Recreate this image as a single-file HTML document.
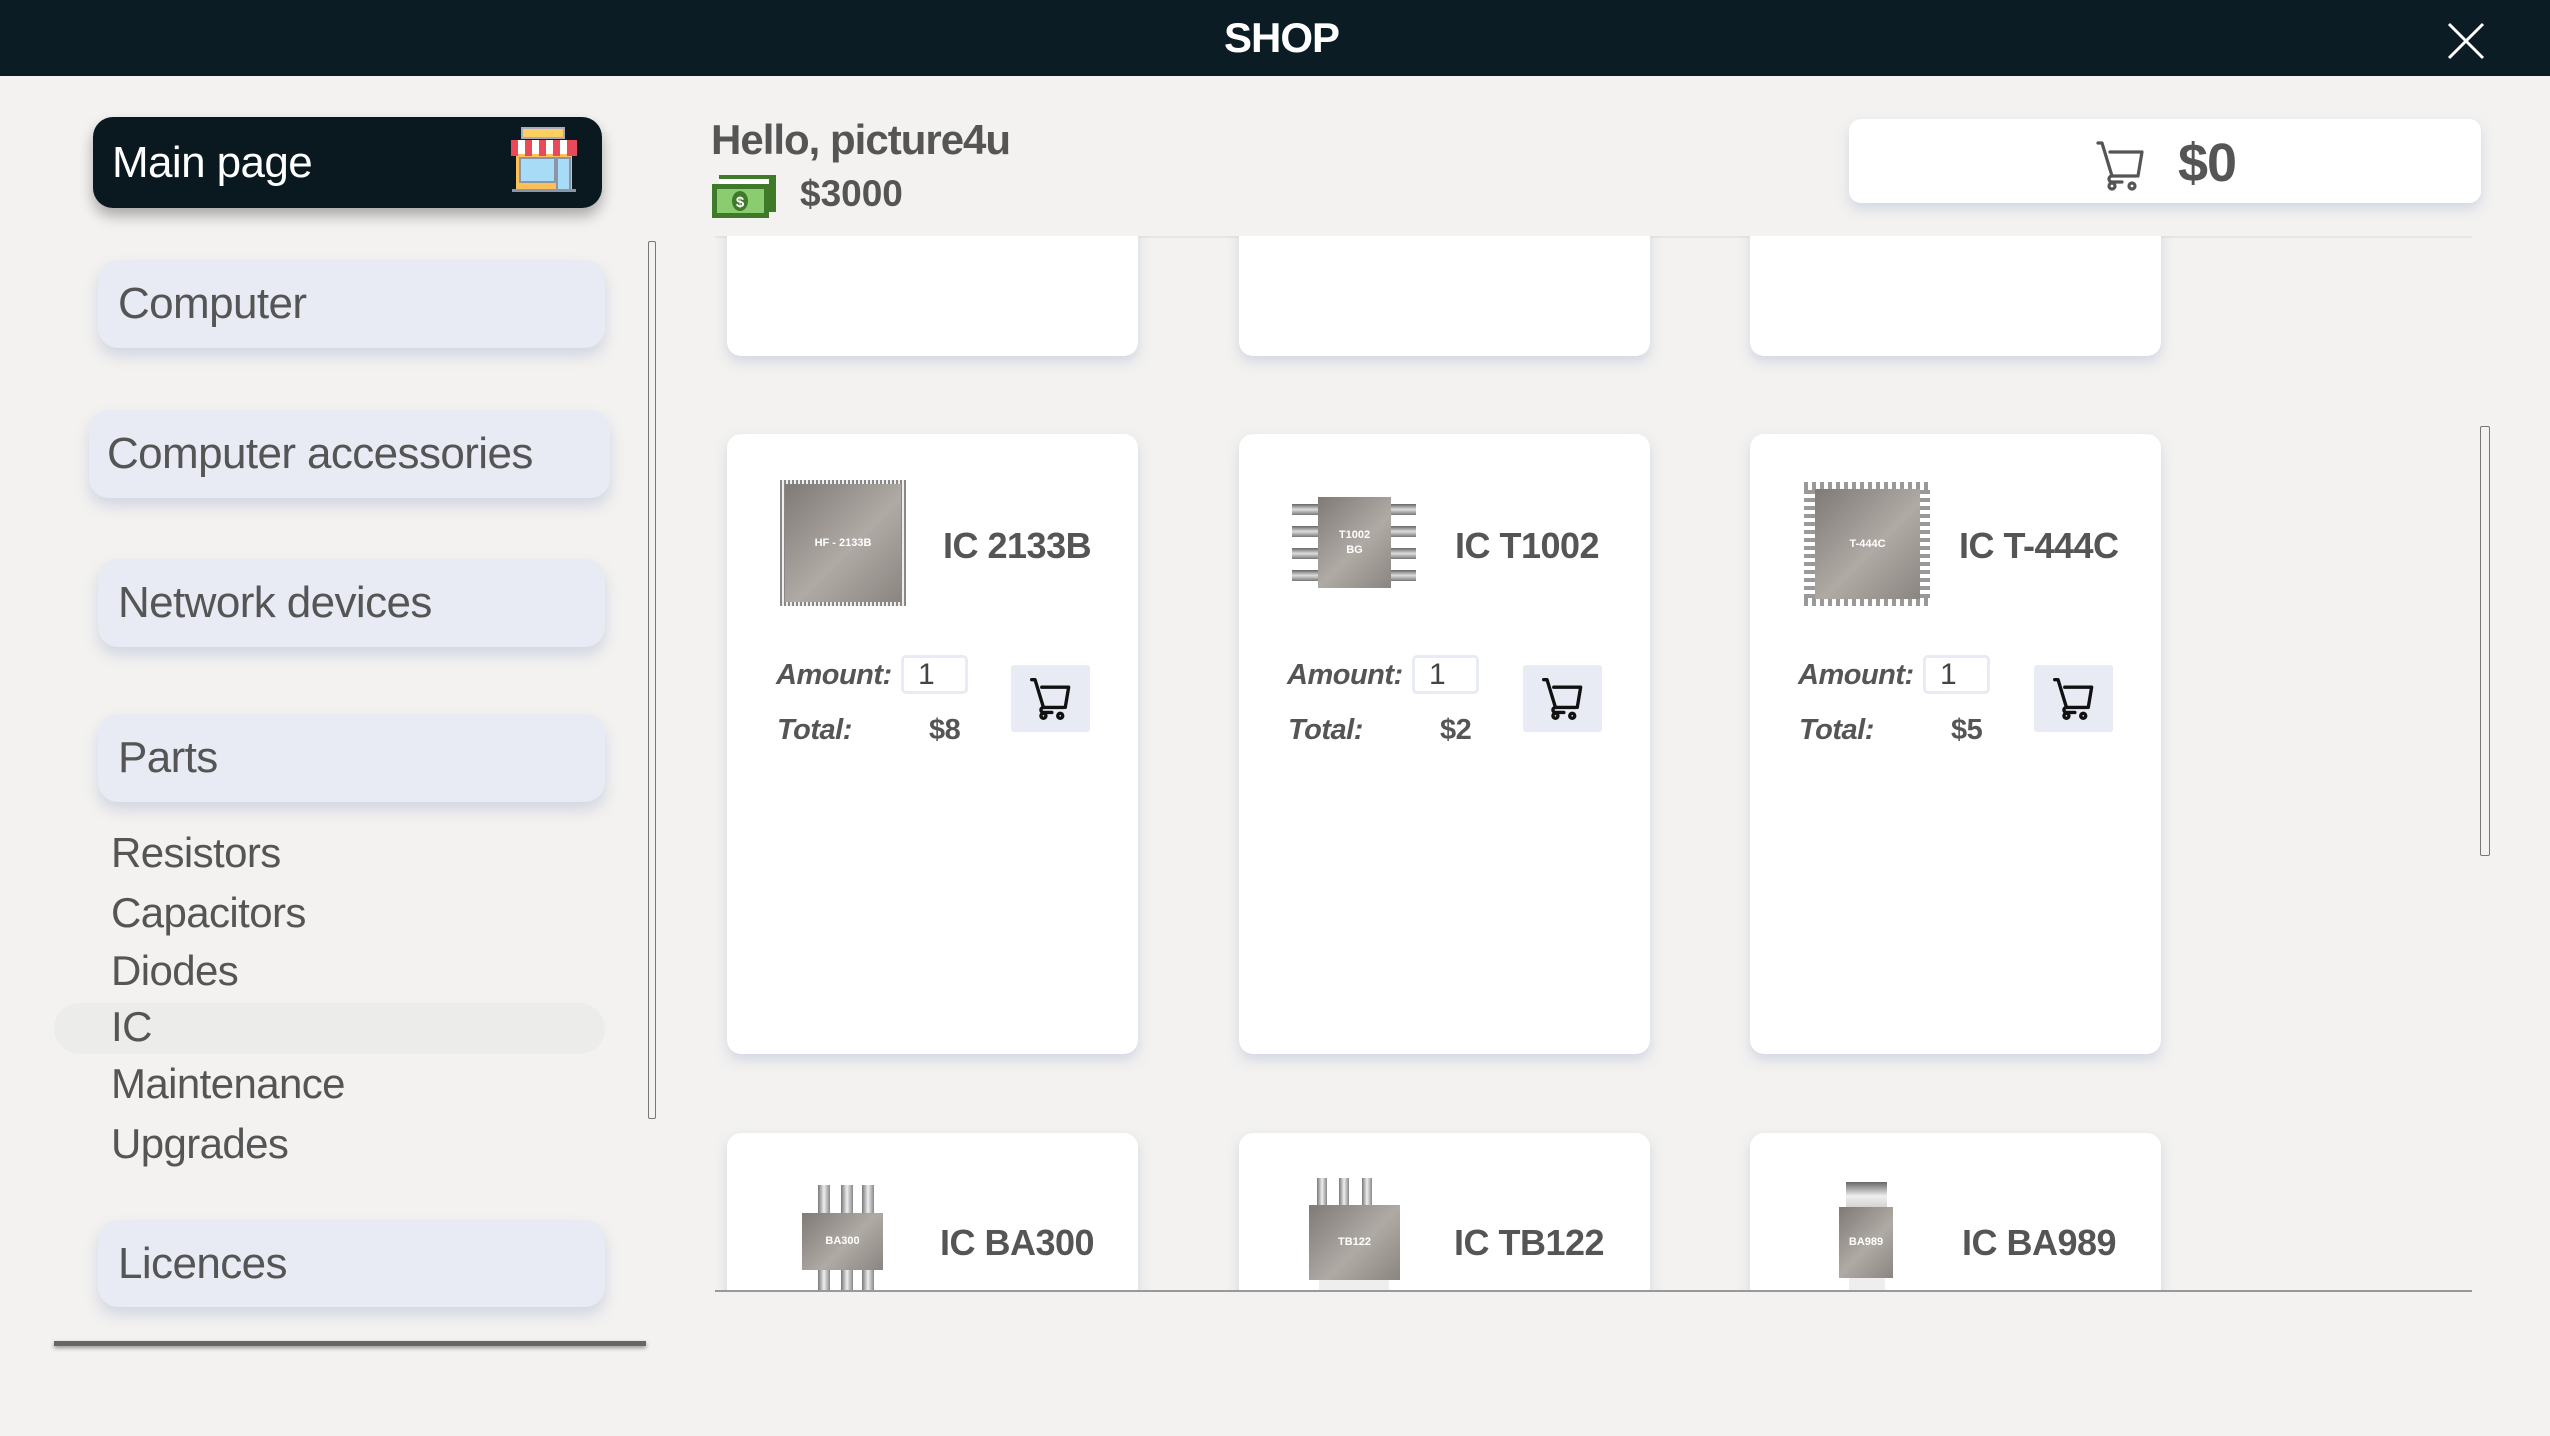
<!DOCTYPE html>
<html><head><meta charset="utf-8">
<style>
*{box-sizing:border-box;margin:0;padding:0}
body{width:2550px;height:1436px;background:#f3f2f0;font-family:"Liberation Sans",sans-serif;color:#555;position:relative;overflow:hidden}
.abs{position:absolute}
.top{left:0;top:0;width:2550px;height:76px;background:#0b1c25}
.shop{left:1224px;top:14px;color:#fff;font-weight:bold;font-size:42px;letter-spacing:-1px}
.btn{position:absolute;background:#e8ebf4;border-radius:20px;box-shadow:0 8px 14px rgba(170,180,210,.45);font-size:44px;color:#555;letter-spacing:-0.6px;padding-left:20px;display:flex;align-items:center}
.sub{position:absolute;left:111px;font-size:42px;color:#555;letter-spacing:-0.6px;font-weight:300}
.card{position:absolute;background:#fff;border-radius:14px;box-shadow:0 6px 12px rgba(180,190,215,.5);width:411px}
.title{position:absolute;font-size:36px;color:#555;font-weight:bold;letter-spacing:-0.5px}
.lab{position:absolute;font-size:29px;font-style:italic;color:#555;font-weight:bold;letter-spacing:-0.5px}
.inp{position:absolute;width:67px;height:39px;border:3px solid #e8ebf4;border-radius:5px;font-size:30px;padding-left:14px;line-height:33px;color:#444}
.cb{position:absolute;width:79px;height:67px;background:#e8ebf4;border-radius:3px;display:flex;align-items:center;justify-content:center}
.chip{position:absolute;background:linear-gradient(135deg,#7f7a76,#b0aaa5 55%,#8a8580);color:#fff;font-size:11px;font-weight:bold;display:flex;align-items:center;justify-content:center;text-align:center;line-height:15px}
.pin{position:absolute;background:linear-gradient(90deg,#777,#eee 50%,#888)}
.pinh{position:absolute;background:linear-gradient(180deg,#666,#ddd 50%,#777)}
</style></head><body>
<div class="abs top"></div>
<div class="abs shop">SHOP</div>
<svg class="abs" style="left:2445px;top:20px" width="42" height="42" viewBox="0 0 42 42"><path d="M4 4L38 38M38 4L4 38" stroke="#fff" stroke-width="3"/></svg>

<div class="abs" style="left:93px;top:117px;width:509px;height:91px;background:#0a1820;border-radius:20px;box-shadow:0 8px 14px rgba(0,0,0,.3);color:#fff;font-size:44px;padding-left:19px;display:flex;align-items:center;letter-spacing:-0.6px">Main page</div>
<svg class="abs" style="left:508px;top:126px" width="72" height="68" viewBox="0 0 72 68">
<rect x="14" y="2" width="42" height="10" fill="#fcd060" stroke="#aab" stroke-width="2"/>
<rect x="8" y="28" width="56" height="36" fill="#fdbf58"/>
<rect x="12" y="32" width="35" height="24" fill="#a8dcf6" stroke="#8a96a8" stroke-width="2"/>
<rect x="49" y="32" width="13" height="32" fill="#a8dcf6" stroke="#8a96a8" stroke-width="2"/>
<rect x="3" y="14" width="66" height="14" fill="#fff"/>
<g fill="#e84a5a"><rect x="3" y="14" width="7" height="16"/><rect x="17" y="14" width="7" height="16"/><rect x="31" y="14" width="7" height="16"/><rect x="45" y="14" width="7" height="16"/><rect x="59" y="14" width="10" height="16"/></g>
<rect x="4" y="63" width="64" height="3" fill="#8a96a8"/>
</svg>
<div class="btn" style="left:98px;top:260px;width:507px;height:88px">Computer</div>
<div class="btn" style="left:89px;top:410px;width:521px;height:88px;padding-left:18px">Computer accessories</div>
<div class="btn" style="left:98px;top:559px;width:507px;height:88px">Network devices</div>
<div class="btn" style="left:98px;top:714px;width:507px;height:88px">Parts</div>
<div class="abs" style="left:54px;top:1003px;width:551px;height:51px;background:#ececea;border-radius:26px"></div>
<div class="sub" style="top:829px">Resistors</div>
<div class="sub" style="top:889px">Capacitors</div>
<div class="sub" style="top:947px">Diodes</div>
<div class="sub" style="top:1003px">IC</div>
<div class="sub" style="top:1060px">Maintenance</div>
<div class="sub" style="top:1120px">Upgrades</div>
<div class="btn" style="left:98px;top:1220px;width:507px;height:87px">Licences</div>
<div class="abs" style="left:54px;top:1341px;width:592px;height:5px;background:#666;box-shadow:0 2px 4px rgba(0,0,0,.4)"></div>
<div class="abs" style="left:648px;top:241px;width:8px;height:878px;border:1.5px solid #777;border-radius:2px"></div>

<div class="abs" style="left:711px;top:116px;font-size:42px;font-weight:bold;letter-spacing:-1px">Hello, picture4u</div>
<svg class="abs" style="left:712px;top:175px" width="64" height="43" viewBox="0 0 64 43">
<rect x="7" y="0" width="57" height="37" fill="#3f7a2a"/><rect x="7" y="4" width="50" height="33" fill="#fff"/>
<rect x="0" y="9" width="57" height="34" fill="#3f7a2a"/><rect x="5" y="14" width="47" height="24" fill="#8ccc70"/>
<ellipse cx="28" cy="26" rx="8" ry="10" fill="#3f7a2a"/><text x="28" y="32" font-size="15" font-weight="bold" fill="#fff" text-anchor="middle" font-family="Liberation Sans">$</text>
</svg>
<div class="abs" style="left:800px;top:173px;font-size:37px;font-weight:bold">$3000</div>
<div class="abs" style="left:1849px;top:119px;width:632px;height:84px;background:#fff;border-radius:12px;box-shadow:0 6px 12px rgba(180,190,215,.5)"></div>
<svg class="abs" style="left:2096px;top:141px" width="50" height="50" viewBox="0 0 50 50"><g fill="none" stroke="#555" stroke-width="3.2" stroke-linecap="round" stroke-linejoin="round"><path d="M2 2h4l10 33h24M14 11h32l-4 24"/><path d="M16 35c-4 0-4 6 0 6h10"/><circle cx="16" cy="45" r="3"/><circle cx="36" cy="45" r="3"/></g></svg>
<div class="abs" style="left:2178px;top:132px;font-size:54px;font-weight:bold;letter-spacing:-1px">$0</div>

<div class="abs" style="left:715px;top:236px;width:1757px;height:1055px;overflow:hidden">
 <div style="position:absolute;left:0;top:0;width:1757px;height:2px;background:#e6e6e6"></div>
 <div class="card" style="left:12px;top:-20px;height:140px"></div>
 <div class="card" style="left:524px;top:-20px;height:140px"></div>
 <div class="card" style="left:1035px;top:-20px;height:140px"></div>
 <div class="card" style="left:12px;top:198px;height:620px"></div>
 <div class="card" style="left:524px;top:198px;height:620px"></div>
 <div class="card" style="left:1035px;top:198px;height:620px"></div>
 <div class="card" style="left:12px;top:897px;height:300px"></div>
 <div class="card" style="left:524px;top:897px;height:300px"></div>
 <div class="card" style="left:1035px;top:897px;height:300px"></div>
</div>
<div class="abs" style="left:715px;top:1290px;width:1757px;height:2px;background:#999"></div>

<div class="abs" style="left:780px;top:480px;width:126px;height:126px;background:repeating-linear-gradient(90deg,#888 0 2px,#eee 2px 4px);"></div>
<div class="chip" style="left:785px;top:484px;width:116px;height:118px">HF - 2133B</div>
<div class="title" style="left:943px;top:525px">IC 2133B</div>

<div class="pinh" style="left:1292px;top:504px;width:124px;height:11px"></div>
<div class="pinh" style="left:1292px;top:526px;width:124px;height:11px"></div>
<div class="pinh" style="left:1292px;top:548px;width:124px;height:11px"></div>
<div class="pinh" style="left:1292px;top:570px;width:124px;height:11px"></div>
<div class="chip" style="left:1318px;top:497px;width:73px;height:91px">T1002<br>BG</div>
<div class="title" style="left:1455px;top:525px">IC T1002</div>

<div class="abs" style="left:1804px;top:482px;width:126px;height:124px;background:repeating-linear-gradient(90deg,#999 0 4px,#fff 4px 8px);"></div>
<div class="abs" style="left:1804px;top:490px;width:126px;height:108px;background:repeating-linear-gradient(0deg,#999 0 4px,#fff 4px 8px);"></div>
<div class="chip" style="left:1815px;top:489px;width:105px;height:110px">T-444C</div>
<div class="title" style="left:1959px;top:525px">IC T-444C</div>

<div class="lab" style="left:776px;top:659px">Amount:</div><div class="inp" style="left:901px;top:655px">1</div>
<div class="lab" style="left:777px;top:714px">Total:</div><div class="lab" style="left:929px;top:714px;font-style:normal">$8</div>
<div class="lab" style="left:1287px;top:659px">Amount:</div><div class="inp" style="left:1412px;top:655px">1</div>
<div class="lab" style="left:1288px;top:714px">Total:</div><div class="lab" style="left:1440px;top:714px;font-style:normal">$2</div>
<div class="lab" style="left:1798px;top:659px">Amount:</div><div class="inp" style="left:1923px;top:655px">1</div>
<div class="lab" style="left:1799px;top:714px">Total:</div><div class="lab" style="left:1951px;top:714px;font-style:normal">$5</div>
<div class="cb" style="left:1011px;top:665px"><svg width="42" height="42" viewBox="0 0 50 50"><g fill="none" stroke="#111" stroke-width="4" stroke-linecap="round" stroke-linejoin="round"><path d="M2 2h4l10 33h24M14 11h32l-4 24"/><path d="M16 35c-4 0-4 6 0 6h10"/><circle cx="16" cy="45" r="3"/><circle cx="36" cy="45" r="3"/></g></svg></div>
<div class="cb" style="left:1523px;top:665px"><svg width="42" height="42" viewBox="0 0 50 50"><g fill="none" stroke="#111" stroke-width="4" stroke-linecap="round" stroke-linejoin="round"><path d="M2 2h4l10 33h24M14 11h32l-4 24"/><path d="M16 35c-4 0-4 6 0 6h10"/><circle cx="16" cy="45" r="3"/><circle cx="36" cy="45" r="3"/></g></svg></div>
<div class="cb" style="left:2034px;top:665px"><svg width="42" height="42" viewBox="0 0 50 50"><g fill="none" stroke="#111" stroke-width="4" stroke-linecap="round" stroke-linejoin="round"><path d="M2 2h4l10 33h24M14 11h32l-4 24"/><path d="M16 35c-4 0-4 6 0 6h10"/><circle cx="16" cy="45" r="3"/><circle cx="36" cy="45" r="3"/></g></svg></div>

<div class="abs" style="left:715px;top:1100px;width:1757px;height:190px;overflow:hidden">
 <div class="pin" style="left:103px;top:85px;width:12px;height:110px"></div>
 <div class="pin" style="left:126px;top:85px;width:12px;height:110px"></div>
 <div class="pin" style="left:147px;top:85px;width:12px;height:110px"></div>
 <div class="chip" style="left:87px;top:113px;width:81px;height:57px">BA300</div>
 <div class="title" style="left:225px;top:122px">IC BA300</div>
 <div class="pin" style="left:602px;top:78px;width:10px;height:30px"></div>
 <div class="pin" style="left:624px;top:78px;width:10px;height:30px"></div>
 <div class="pin" style="left:647px;top:78px;width:10px;height:30px"></div>
 <div class="abs" style="left:604px;top:175px;width:70px;height:30px;background:#eee"></div>
 <div class="chip" style="left:594px;top:105px;width:91px;height:75px">TB122</div>
 <div class="title" style="left:739px;top:122px">IC TB122</div>
 <div class="abs" style="left:1131px;top:82px;width:41px;height:28px;background:linear-gradient(180deg,#666,#eee 50%,#ccc)"></div>
 <div class="abs" style="left:1134px;top:175px;width:36px;height:20px;background:#eee"></div>
 <div class="chip" style="left:1124px;top:107px;width:54px;height:71px">BA989</div>
 <div class="title" style="left:1247px;top:122px">IC BA989</div>
</div>

<div class="abs" style="left:2480px;top:426px;width:10px;height:430px;border:1.5px solid #777;border-radius:2px"></div>
</body></html>
